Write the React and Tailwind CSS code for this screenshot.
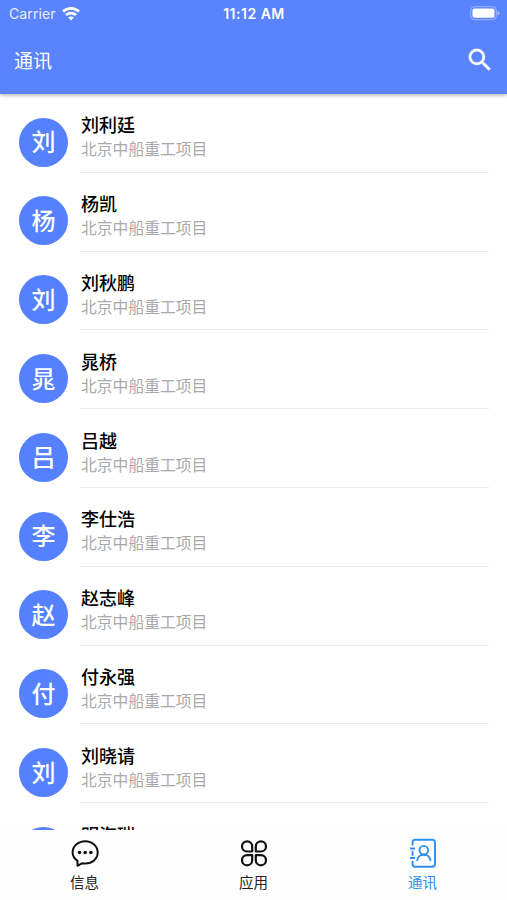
import React from "react";

const people = ["刘利廷", "杨凯", "刘秋鹏", "晁桥", "吕越", "李仕浩", "赵志峰", "付永强", "刘晓请", "明海瑞"];

function StatusBar() {
  return (
    <div className="grid h-[27px] grid-cols-3 items-center pl-[9px] pr-[7px]">
      <div className="flex items-center gap-[6px] text-[14px] leading-none tracking-[0.1px] text-white/85">
        <span>Carrier</span>
        <svg width="18" height="14" viewBox="0 0 18 14" fill="none" stroke="white" strokeWidth="2.7">
          <path d="M1 4.6C5.5.4 12.5.4 17 4.6" />
          <path d="M4 8.1C6.8 5.5 11.2 5.5 14 8.1" />
          <path d="M6.2 10.6C7.8 9 10.2 9 11.8 10.6L9 13.4Z" fill="white" stroke="none" />
        </svg>
      </div>
      <div className="whitespace-nowrap pr-px pt-px text-center text-[14px] font-semibold leading-none tracking-[0.5px]">11:12 AM</div>
      <svg className="justify-self-end" width="30" height="15" viewBox="0 0 30 15">
        <rect x=".7" y=".7" width="25.6" height="13" rx="3.8" fill="none" stroke="white" strokeOpacity=".42" />
        <rect x="2.5" y="2.6" width="22" height="9.2" rx="2" fill="white" />
        <path d="M27.5 5v4.6q2-.7 2-2.3t-2-2.3" fill="white" fillOpacity=".45" />
      </svg>
    </div>
  );
}

function Header() {
  return (
    <header className="relative z-10 h-[94px] shrink-0 bg-[#5983ff] text-white shadow-[0_1px_4px_rgba(0,0,0,0.35)]">
      <StatusBar />
      <div className="flex h-[66px] items-center justify-between pl-[14px] pr-[12px]">
        <h1 className="pt-[2px] text-[19px] leading-none">通讯</h1>
        <svg className="mb-px" width="30" height="30" viewBox="0 0 24 24" fill="white" stroke="white" strokeWidth=".3">
          <path d="M15.5 14h-.79l-.28-.27A6.471 6.471 0 0 0 16 9.5 6.5 6.5 0 1 0 9.5 16c1.61 0 3.09-.59 4.23-1.57l.27.28v.79l5 4.99L20.49 19l-4.99-5zm-6 0C7.01 14 5 11.99 5 9.5S7.01 5 9.5 5 14 7.01 14 9.5 11.99 14 9.5 14z" />
        </svg>
      </div>
    </header>
  );
}

function PersonRow({ name }) {
  return (
    <li className="flex h-[78.8px] shrink-0 pl-[19px] pr-[18px]">
      <div className="mt-[23.7px] flex size-[49px] shrink-0 items-center justify-center rounded-full bg-[#5580ff] pt-[2px] text-[24px] font-medium leading-none text-white">
        {name[0]}
      </div>
      <div className="ml-[12px] flex-1 border-b border-[#ebebeb] pt-[19.4px]">
        <div className="pl-px text-[18px] font-medium leading-[26px] text-black">{name}</div>
        <div className="pl-px text-[15.8px] leading-[22px] text-[#a9a9a9]">北京中船重工项目</div>
      </div>
    </li>
  );
}

function MessageIcon() {
  return (
    <svg width="30" height="30" viewBox="0 0 30 30" fill="none" stroke="#111" strokeWidth="2" strokeLinejoin="round">
      <path d="M7.5 27.8V22.9C4.6 20.9 2.6 18 2.6 14.6 2.6 8.2 8.1 3.3 15.2 3.3s12.5 4.9 12.5 11.3S22.2 25.4 15.2 25.4q-1.5 0-2.9-.2Z" />
      <g fill="#111" stroke="none">
        <circle cx="9.5" cy="14.5" r="1.8" />
        <circle cx="15.2" cy="14.5" r="1.8" />
        <circle cx="20.9" cy="14.5" r="1.8" />
      </g>
    </svg>
  );
}

function AppsIcon() {
  return (
    <svg width="30" height="30" viewBox="0 0 30 30" fill="none" stroke="#111" strokeWidth="2.2" strokeLinejoin="round">
      <path d="M13.2 13.5H8.1A5.1 5.1 0 1 1 13.2 8.4Z" />
      <path d="M16.8 13.5V8.4A5.1 5.1 0 1 1 21.9 13.5Z" />
      <path d="M13.2 17.1V22.2A5.1 5.1 0 1 1 8.1 17.1Z" />
      <path d="M16.8 17.1H21.9A5.1 5.1 0 1 1 16.8 22.2Z" />
    </svg>
  );
}

function ContactsIcon() {
  return (
    <svg width="30" height="30" viewBox="0 0 30 30" fill="none" stroke="#2a90ea" strokeWidth="1.9">
      <path d="M4.5 7.5V4.4Q4.5 1.7 7.2 1.7H24.3Q27 1.7 27 4.4V26Q27 28.7 24.3 28.7H7.2Q4.5 28.7 4.5 26V22.7M4.5 12.7v5M2 10.5h5M2 20h5" />
      <circle cx="15.8" cy="12.2" r="4.3" />
      <path d="M9.2 23C9.2 19 12 16.7 15.8 16.7s6.6 2.3 6.6 6.3" />
    </svg>
  );
}

function Tab({ icon, label, active }) {
  return (
    <div className={`flex flex-1 flex-col items-center pt-[8px] ${active ? "text-[#2a90ea]" : "text-[#222]"}`}>
      {icon}
      <span className="mt-[8px] text-[14.5px] leading-[14px]">{label}</span>
    </div>
  );
}

export default function App() {
  return (
    <div className="flex h-[900px] w-[507px] flex-col overflow-hidden bg-white font-['Inter','Noto_Sans_CJK_SC',sans-serif]">
      <Header />
      <ul className="min-h-0 flex-1 overflow-hidden">
        {people.map((name) => (
          <PersonRow key={name} name={name} />
        ))}
      </ul>
      <nav className="flex h-[70px] shrink-0 bg-[#fefefe]">
        <Tab icon={<MessageIcon />} label="信息" />
        <Tab icon={<AppsIcon />} label="应用" />
        <Tab icon={<ContactsIcon />} label="通讯" active />
      </nav>
    </div>
  );
}
